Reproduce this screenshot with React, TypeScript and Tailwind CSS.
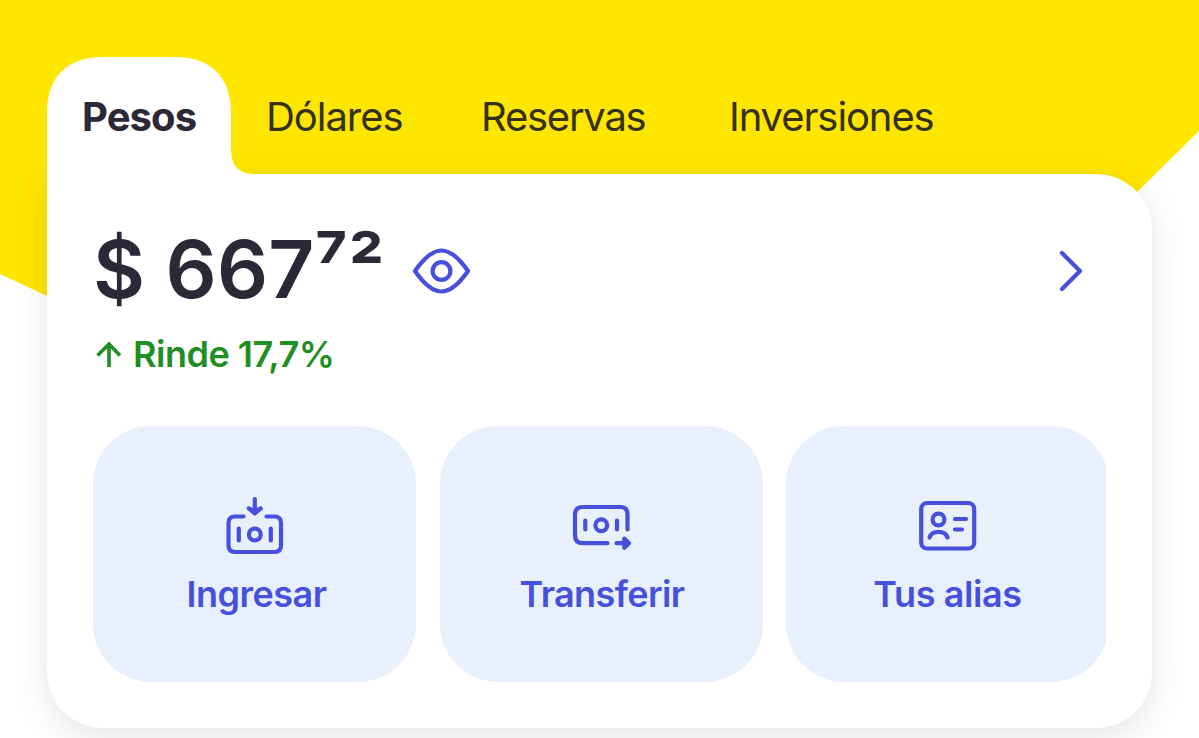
import type { ReactNode } from "react";

const tabs = [
  { label: "Dólares", className: "ml-[35px] w-[215px] tracking-[-1.05px]" },
  { label: "Reservas", className: "w-[248px] tracking-[-1.25px]" },
  { label: "Inversiones", className: "tracking-[-1.1px]" },
];

const stroke = {
  fill: "none",
  stroke: "currentColor",
  strokeWidth: 4.2,
  strokeLinecap: "round" as const,
  strokeLinejoin: "round" as const,
};

function EyeIcon() {
  return (
    <svg width="60" height="50" viewBox="411 246 60 50" {...stroke}>
      <path d="M415 271 C424 258 432 250.500 441.500 250.500 S459 258 468 271 C459 284 451 291.500 441.500 291.500 S424 284 415 271 Z" />
      <circle cx="441.500" cy="271" r="8.900" />
    </svg>
  );
}

function ChevronIcon() {
  return (
    <svg width="30" height="46" viewBox="1055 248 30 46" {...stroke}>
      <path d="M1062 253 L1080 271 L1062 289" />
    </svg>
  );
}

function UpArrowIcon() {
  return (
    <svg width="26" height="28" viewBox="96 341 26 28" {...stroke} strokeWidth={3.6} strokeLinecap="butt" strokeLinejoin="miter">
      <path d="M109 367 V344 M97.500 355.500 L109 344 L120 355.500" />
    </svg>
  );
}

function DepositIcon() {
  return (
    <svg width="64" height="64" viewBox="223 494 64 64" {...stroke}>
      <path d="M243.500 516.500 H235 Q228.500 516.500 228.500 523 V545.500 Q228.500 552 235 552 H274.500 Q281 552 281 545.500 V523 Q281 516.500 274.500 516.500 H266.500" />
      <circle cx="254.800" cy="534.500" r="5.900" />
      <path d="M238.800 528.500 V540.500 M270.800 528.500 V540.500 M254.800 499 V512" />
      <path d="M248.800 508.500 L254.800 513.500 L260.800 508.500 L254.800 511 Z" />
    </svg>
  );
}

function TransferIcon() {
  return (
    <svg width="64" height="64" viewBox="569 494 64 64" {...stroke}>
      <path d="M607.500 543.200 H583 Q575 543.200 575 535.500 V514.500 Q575 507 583 507 H620 Q627.500 507 627.500 514.500 V529.500" />
      <circle cx="601.300" cy="525.300" r="5.900" />
      <path d="M585.300 520.500 V529.500 M617 520.500 V529.500 M616.500 543.200 H628" />
      <path d="M624.300 538.500 L629 543.200 L624.300 547.800 Z" fill="currentColor" />
    </svg>
  );
}

function AliasIcon() {
  return (
    <svg width="64" height="64" viewBox="916 494 64 64" {...stroke}>
      <rect x="921.200" y="503" width="53" height="45.500" rx="6" />
      <circle cx="938.500" cy="519.500" r="5.900" />
      <path d="M929.500 537.500 C932 530 945 530 947.500 537.500 M955 519 H966 M955 529.500 H962" />
    </svg>
  );
}

function Action({ icon, label, labelClass }: { icon: ReactNode; label: string; labelClass: string }) {
  return (
    <button className="flex h-[256px] w-[323px] shrink-0 flex-col items-center rounded-[58px] bg-[#e8f0fe] pt-[68px] text-[#4650dc]">
      {icon}
      <span className={`mt-[14px] text-[36px] leading-[44px] font-semibold ${labelClass}`}>{label}</span>
    </button>
  );
}

export default function App() {
  return (
    <main className="relative isolate h-[738px] w-[1199px] overflow-hidden bg-white pt-[57px] font-['Inter',sans-serif] text-[#2b2838]">
      <svg className="absolute inset-0 -z-10" width="1199" height="738">
        <path d="M0 0 H1199 V131 L1137 192 L900 400 H268 L47 296 L0 274 Z" fill="#ffe600" />
      </svg>

      <nav className="relative z-10 ml-[47px] flex h-[117px] text-[40px] leading-[48px]">
        <div className="relative w-[184px] pt-[36px] pl-[35px] font-bold">
          <svg className="absolute top-0 left-0 -z-10" width="210" height="119" viewBox="0 0 210 119">
            <path d="M0 119 V56 C0 20 20 0 56 0 H128 C164 0 184 20 184 56 V92 C184 109 192 117 208 117 V119 Z" fill="white" />
          </svg>
          <span className="tracking-[-0.9px]">Pesos</span>
        </div>
        {tabs.map((tab) => (
          <div key={tab.label} className={`pt-[36px] text-[#35300f] ${tab.className}`}>
            {tab.label}
          </div>
        ))}
      </nav>

      <section className="mx-[47px] h-[554px] w-[1105px] rounded-[56px] rounded-tl-none bg-white px-[46px] shadow-[0_8px_36px_rgba(0,0,0,0.11)]">
        <div className="flex h-[160px] items-start pt-[45px]">
          <div className="w-[318px] text-[80px] leading-[100px] font-semibold tracking-[0.2px] whitespace-nowrap">$ 667⁷²</div>
          <div className="mt-[27px] text-[#4650dc]"><EyeIcon /></div>
          <div className="mt-[29px] mr-[21px] ml-auto text-[#4650dc]"><ChevronIcon /></div>
        </div>
        <div className="flex h-[92px] items-start pl-[3px] text-[#1f8f24]">
          <div className="mt-[7px]"><UpArrowIcon /></div>
          <span className="-mt-px ml-[11px] text-[36px] leading-[42px] font-semibold tracking-[-0.5px]">Rinde 17,7%</span>
        </div>
        <div className="flex w-[1013px] gap-[23.500px] overflow-hidden">
          <Action icon={<DepositIcon />} label="Ingresar" labelClass="pl-[4px] tracking-[-0.5px]" />
          <Action icon={<TransferIcon />} label="Transferir" labelClass="pl-[2px] tracking-[-0.6px]" />
          <Action icon={<AliasIcon />} label="Tus alias" labelClass="tracking-[-0.4px]" />
        </div>
      </section>
    </main>
  );
}
